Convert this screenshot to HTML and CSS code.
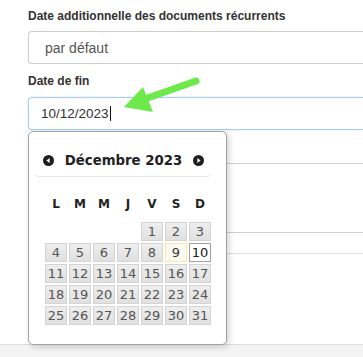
FILE: index.html
```html
<!DOCTYPE html>
<html lang="fr">
<head>
<meta charset="utf-8">
<link rel="stylesheet" href="styles.css">
</head>
<body>
<div class="page">
  <div class="form">
    <label class="label label-first">Date additionnelle des documents récurrents</label>
    <div class="input input-select">par défaut</div>
    <label class="label label-second">Date de fin</label>
    <div class="input input-focus">10/12/2023<span class="caret"></span></div>
    <div class="row row-a"></div>
    <div class="row row-b"></div>
    <div class="row row-c"></div>
    <div class="row row-d"></div>
  </div>

  <div class="picker">
    <div class="picker-header">
      <svg class="nav-icon" viewBox="0 0 11 11" width="11" height="11"><circle cx="5.5" cy="5.5" r="5.5" fill="#1e1e1e"/><path d="M3.4 5.5 L6.6 3.1 L6.6 7.9 Z" fill="#fff"/></svg>
      <div class="picker-title">Décembre 2023</div>
      <svg class="nav-icon" viewBox="0 0 11 11" width="11" height="11"><circle cx="5.5" cy="5.5" r="5.5" fill="#1e1e1e"/><path d="M7.6 5.5 L4.4 3.1 L4.4 7.9 Z" fill="#fff"/></svg>
    </div>
    <div class="weekdays">
      <span>L</span><span>M</span><span>M</span><span>J</span><span>V</span><span>S</span><span>D</span>
    </div>
    <div class="days">
      <span class="empty"></span><span class="empty"></span><span class="empty"></span><span class="empty"></span>
      <span class="day">1</span><span class="day">2</span><span class="day">3</span>
      <span class="day">4</span><span class="day">5</span><span class="day">6</span><span class="day">7</span><span class="day">8</span><span class="day today">9</span><span class="day selected">10</span>
      <span class="day">11</span><span class="day">12</span><span class="day">13</span><span class="day">14</span><span class="day">15</span><span class="day">16</span><span class="day">17</span>
      <span class="day">18</span><span class="day">19</span><span class="day">20</span><span class="day">21</span><span class="day">22</span><span class="day">23</span><span class="day">24</span>
      <span class="day">25</span><span class="day">26</span><span class="day">27</span><span class="day">28</span><span class="day">29</span><span class="day">30</span><span class="day">31</span>
    </div>
  </div>

  <svg class="arrow" width="363" height="345" viewBox="0 0 363 345">
    <line x1="196" y1="81" x2="142" y2="100" stroke="#6ee94b" stroke-width="7" stroke-linecap="round"/>
    <polygon points="124,107 143,87 153,112" fill="#6ee94b"/>
  </svg>
</div>
<div class="footer"></div>
</body>
</html>
```

FILE: styles.css
```css
html, body {
  margin: 0;
  padding: 0;
  background: #ffffff;
  overflow: hidden;
  width: 363px;
  height: 357px;
}

.page {
  position: relative;
  height: 345px;
  box-sizing: border-box;
  border-bottom: 1px solid #dedede;
  background: #ffffff;
}

.form {
  padding: 9px 0 0 28px;
}

.label {
  display: block;
  font-family: "Liberation Sans", Arial, sans-serif;
  font-weight: bold;
  font-size: 12px;
  line-height: 15px;
  color: #333333;
  white-space: nowrap;
}

.label-first {
  margin-bottom: 7px;
}

.label-second {
  margin-top: 10px;
  margin-bottom: 8px;
}

.input {
  box-sizing: border-box;
  width: 335px;
  height: 33px;
  border: 1px solid #cccccc;
  border-right: none;
  border-radius: 4px 0 0 4px;
  font-family: "Liberation Sans", Arial, sans-serif;
  display: flex;
  align-items: center;
  white-space: nowrap;
}

.input-select {
  padding-left: 16px;
  font-size: 14px;
  color: #555555;
}

.input-focus {
  padding-left: 12px;
  font-size: 13.5px;
  color: #333333;
  border-color: #a9cdf0;
  box-shadow: 0 0 2px rgba(102, 175, 233, 0.35);
}

.caret {
  display: inline-block;
  width: 1px;
  height: 15px;
  background: #111111;
  margin-left: 1px;
}

.row {
  box-sizing: border-box;
  width: 335px;
  border-bottom: 1px solid #cfcfcf;
}

.row-a { height: 34px; }
.row-b { height: 69px; }
.row-c { height: 21px; border-bottom-color: #dcdcdc; }
.row-d { height: 91px; border-bottom: none; }

.footer {
  height: 12px;
  background: #f4f4f4;
}

.picker {
  position: absolute;
  top: 131px;
  left: 28px;
  width: 199px;
  height: 214px;
  box-sizing: border-box;
  background: #ffffff;
  border: 1px solid #a3a3a3;
  border-radius: 5px;
  box-shadow: 2px 2px 6px rgba(0, 0, 0, 0.18);
  padding: 14px 0 0 5px;
}

.picker-header {
  box-sizing: border-box;
  width: 178px;
  height: 31px;
  border-bottom: 1px solid #e6e6e6;
  border-radius: 0 0 5px 5px;
  display: grid;
  grid-template-columns: 11px 1fr 11px;
  align-items: center;
  padding: 0 8px 1px 9px;
}

.nav-icon {
  display: block;
}

.picker-title {
  text-align: center;
  font-family: "DejaVu Sans", Verdana, sans-serif;
  font-weight: bold;
  font-size: 13.3px;
  color: #222222;
  white-space: nowrap;
}

.weekdays,
.days {
  display: grid;
  grid-template-columns: repeat(7, 22px);
  column-gap: 2px;
  margin-left: 11px;
}

.weekdays {
  margin-top: 19px;
  height: 16px;
  line-height: 16px;
  font-family: "DejaVu Sans", Verdana, sans-serif;
  font-weight: bold;
  font-size: 12px;
  color: #222222;
  text-align: center;
}

.days {
  margin-top: 10px;
  grid-auto-rows: 19px;
  row-gap: 2px;
}

.day {
  box-sizing: border-box;
  border: 1px solid #d3d3d3;
  background: linear-gradient(#eeeeee, #e0e0e0);
  color: #555555;
  font-family: "DejaVu Sans", Verdana, sans-serif;
  font-size: 13px;
  line-height: 17px;
  text-align: center;
}

.day.today {
  background: #fcfaf0;
  border-color: #f6eaa8;
  color: #363636;
}

.day.selected {
  background: #ffffff;
  border-color: #a0a0a0;
  color: #212121;
}

.arrow {
  position: absolute;
  top: 0;
  left: 0;
  pointer-events: none;
}
```
